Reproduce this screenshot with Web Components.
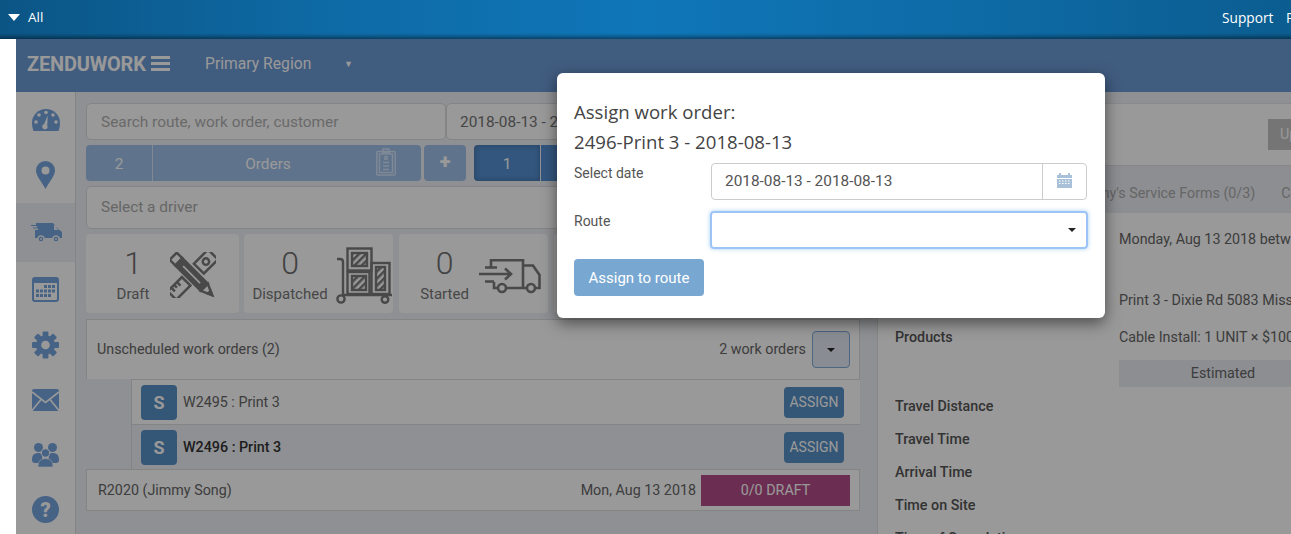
<!DOCTYPE html>
<html>
<head>
<meta charset="utf-8">
<title>ZenduWork</title>
<style>
  html, body { margin: 0; height: 100%; overflow: hidden; background: #fff; }
  body { font-family: Roboto, sans-serif; font-size: 14.3px; }
</style>
</head>
<body>
<zw-topbar></zw-topbar>
<zw-shell>
  <zw-header></zw-header>
  <zw-sidenav></zw-sidenav>
  <zw-orders></zw-orders>
  <zw-details></zw-details>
  <zw-modal></zw-modal>
</zw-shell>

<script>
function define(name, html, proto) {
  const template = document.createElement('template');
  template.innerHTML = html;
  customElements.define(name, class extends HTMLElement {
    constructor() {
      super();
      this.attachShadow({ mode: 'open' });
      this.shadowRoot.appendChild(template.content.cloneNode(true));
    }
    connectedCallback() {
      if (proto) proto.call(this);
    }
  });
}

define('zw-topbar', `
  <style>
    :host {
      display: flex; align-items: center; height: 39px; box-sizing: border-box; padding: 0 0 5px 8px;
      color: #fff; font: 13.500px "Open Sans", sans-serif; white-space: nowrap; overflow: hidden;
      background:
        linear-gradient(to bottom, transparent 33px, rgba(0,0,0,.1) 35px, rgba(0,0,0,.42) 39px),
        linear-gradient(to right, #0b5585 0, #0e6aa5 25%, #0f76b8 50%, #0e6ba6 75%, #0b5d90 100%);
    }
    .arrow { width: 0; height: 0; border: 6.500px solid transparent; border-top: 7px solid #fff; border-bottom: 0; margin-right: 8px; }
    .grow { flex: 1; }
    .support { font-size: 13.700px; width: 64px; }
    .p { font-size: 13.700px; margin-right: -60px; width: 65px; }
  </style>
  <span class="arrow"></span><span>All</span><span class="grow"></span>
  <span class="support">Support</span><span class="p">Profile</span>
`);

define('zw-shell', `
  <style>
    :host {
      display: grid; position: relative; margin-left: 16px; height: 495px; overflow: hidden;
      grid-template-columns: 60px 801px 1fr; grid-template-rows: 53px 1fr; background: #eef0f5;
    }
  </style>
  <slot></slot>
`);

define('zw-header', `
  <style>
    :host {
      grid-column: 1 / -1; display: flex; align-items: center; padding-left: 11px; padding-bottom: 4px;
      background: #6c99d4; color: #fff; white-space: nowrap;
    }
    .logo { font-size: 20px; font-weight: 700; letter-spacing: -.2px; width: 120px; }
    .burger { width: 19px; height: 15px; margin: 0 35px 0 4px; flex: none;
      background: linear-gradient(#fff 3px, transparent 3px 6px, #fff 6px 9px, transparent 9px 12px, #fff 12px); }
    .region { font-size: 15.700px; width: 139px; }
    .caret { font-size: 9px; }
  </style>
  <span class="logo">ZENDUWORK</span><span class="burger"></span>
  <span class="region">Primary Region</span><span class="caret">&#9660;</span>
`);

define('zw-sidenav', `
  <style>
    :host { display: block; background: #fff; border-right: 1px solid #ddd; overflow: hidden; box-sizing: border-box; }
    a { display: flex; align-items: center; justify-content: center; height: 55px; }
    a.top { height: 55.500px; }
    a.on { height: 59px; background: #eef0f5; }
    svg { display: block; fill: #76a5e0; }
  </style>
  <a class="top"><svg width="28" height="22" viewBox="0 0 28 22">
    <path d="M14 0a14 14 0 0 1 14 14c0 3-.6 5.500-1.500 8H1.500C.6 19.500 0 17 0 14A14 14 0 0 1 14 0z"/>
    <g fill="#fff"><circle cx="14" cy="3.500" r="1.800"/><circle cx="7" cy="6" r="1.800"/><circle cx="21" cy="6" r="1.800"/><circle cx="4" cy="13" r="1.800"/><circle cx="24" cy="13" r="1.800"/>
    <path d="M15.800 6.500l-.6 10a2.600 2.600 0 1 1-3.200-1.200z"/></g>
  </svg></a>
  <a class="top"><svg width="19" height="28" viewBox="0 0 19 28">
    <path fill-rule="evenodd" d="M9.500 0A9.500 9.500 0 0 1 19 9.500C19 15 13 21 9.500 28 6 21 0 15 0 9.500A9.500 9.500 0 0 1 9.500 0zm0 5.500a4 4 0 1 0 0 8 4 4 0 0 0 0-8z"/>
  </svg></a>
  <a class="on"><svg width="32" height="19" viewBox="0 0 32 19">
    <path fill-rule="evenodd" d="M6 0H23l6 7 2 1q1 .5 1 2v5H5V7H8V5.500H3V4.500H7V3H1V2H6zM24 2v5h4L25 2z"/>
    <circle cx="11" cy="16" r="3" stroke="#eef0f5" stroke-width="1.500"/><circle cx="26" cy="16" r="3" stroke="#eef0f5" stroke-width="1.500"/>
    <circle cx="11" cy="16" r="1" fill="#eef0f5"/><circle cx="26" cy="16" r="1" fill="#eef0f5"/>
  </svg></a>
  <a><svg width="27" height="25" viewBox="0 0 27 25">
    <rect x="1" y="1" width="25" height="23" rx="2" fill="#fff" stroke="#76a5e0" stroke-width="2"/>
    <rect x="1" y="1" width="25" height="5" fill="#76a5e0"/>
    <rect x="12" y="8" width="3" height="3"/><rect x="16" y="8" width="3" height="3"/><rect x="20" y="8" width="3" height="3"/>
    <rect x="4" y="12.500" width="3" height="3"/><rect x="8" y="12.500" width="3" height="3"/><rect x="12" y="12.500" width="3" height="3"/><rect x="16" y="12.500" width="3" height="3"/><rect x="20" y="12.500" width="3" height="3"/>
    <rect x="4" y="17" width="3" height="3"/><rect x="8" y="17" width="3" height="3"/><rect x="12" y="17" width="3" height="3"/><rect x="16" y="17" width="3" height="3"/>
  </svg></a>
  <a><svg width="27" height="28" viewBox="-14 -14 28 28">
    <circle r="10"/>
    <g><rect x="-3" y="-14" width="6" height="7" rx="1"/><rect x="-3" y="-14" width="6" height="7" rx="1" transform="rotate(45)"/><rect x="-3" y="-14" width="6" height="7" rx="1" transform="rotate(90)"/><rect x="-3" y="-14" width="6" height="7" rx="1" transform="rotate(135)"/><rect x="-3" y="-14" width="6" height="7" rx="1" transform="rotate(180)"/><rect x="-3" y="-14" width="6" height="7" rx="1" transform="rotate(225)"/><rect x="-3" y="-14" width="6" height="7" rx="1" transform="rotate(270)"/><rect x="-3" y="-14" width="6" height="7" rx="1" transform="rotate(315)"/></g>
    <circle r="4.500" fill="#fff"/>
  </svg></a>
  <a><svg width="27" height="22" viewBox="0 0 27 22">
    <rect width="27" height="22" rx="2"/>
    <path d="M0 3l13.500 10.500L27 3M0 21.500L9 10.500M27 21.500L18 10.500" fill="none" stroke="#fff" stroke-width="1.600"/>
  </svg></a>
  <a><svg width="27" height="24" viewBox="0 0 27 24">
    <circle cx="6.500" cy="4.500" r="4.500"/><circle cx="20.500" cy="4.500" r="4.500"/>
    <path d="M0 17c0-5 2-7 6.500-7 2 0 3 .5 4 1.500-1 3 0 5 1 6-2 1-3 1.500-3.500 2.500H3q-3 0-3-3zM27 17c0-5-2-7-6.500-7-2 0-3 .5-4 1.500 1 3 0 5-1 6 2 1 3 1.500 3.500 2.500H24q3 0 3-3z"/>
    <circle cx="13.500" cy="10" r="4.200" stroke="#fff"/>
    <path d="M6 24q-.5-8 7.500-8.500Q21.500 16 21 24z" stroke="#fff" stroke-width=".6"/>
  </svg></a>
  <a><svg width="27" height="27" viewBox="0 0 27 27">
    <circle cx="13.500" cy="13.500" r="13.500"/>
    <text x="13.500" y="20.500" text-anchor="middle" fill="#fff" font-family="Roboto, sans-serif" font-weight="900" font-size="20">?</text>
  </svg></a>
`);

define('zw-stat', `
  <style>
    :host { display: flex; align-items: flex-start; background: #fff; border-radius: 4px; height: 79px; box-sizing: border-box; position: relative; flex: none; color: #777; }
    .txt { text-align: center; white-space: nowrap; display: flex; flex-direction: column; align-items: center; }
    .n { font-size: 32px; line-height: 36px; margin-top: 11px; font-weight: 300; color: #6f6f6f; }
    .l { font-size: 15px; line-height: 20px; margin-top: 3px; }
    ::slotted(svg) { flex: none; display: block; }
  </style>
  <div class="txt"><span class="n"></span><span class="l"></span></div>
  <slot></slot>
`, function () {
  const r = this.shadowRoot;
  r.querySelector('.n').textContent = this.getAttribute('value');
  r.querySelector('.l').textContent = this.getAttribute('label');
  r.querySelector('.txt').style.width = this.getAttribute('tw') + 'px';
});

define('zw-order-row', `
  <style>
    :host { display: flex; align-items: center; height: 45px; box-sizing: border-box; margin-left: 45px; padding: 0 16px 0 9px; background: #fff; border-top: 1px solid #ddd; border-left: 1px solid #ddd; color: #666; }
    :host([selected]) { background: #eef0f5; color: #333; font-weight: 500; }
    .s { width: 36px; height: 35px; border-radius: 4px; background: #5790c6; color: #fff; font-size: 18px; font-weight: 700; display: flex; align-items: center; justify-content: center; margin-right: 6px; flex: none; }
    .t { flex: 1; white-space: nowrap; }
    .b { width: 60px; height: 31px; border-radius: 4px; background: #5790c6; color: #fff; display: flex; align-items: center; justify-content: center; font-weight: 400; font-size: 14px; }
  </style>
  <span class="s">S</span><span class="t"><slot></slot></span><span class="b">ASSIGN</span>
`);

define('zw-orders', `
  <style>
    :host { display: flex; flex-direction: column; padding: 11px 17px 0 10px; color: #666; min-width: 0; }
    .field { background: #fff; border: 1px solid #ddd; border-radius: 5px; box-sizing: border-box; display: flex; align-items: center; white-space: nowrap; font-size: 15.400px; overflow: hidden; }
    .r1 { display: flex; height: 37px; }
    .search { width: 360px; padding-left: 14px; color: #b0b0b0; }
    .date { flex: 1; padding-left: 13px; color: #757575; }
    .r2 { display: flex; height: 36px; margin-top: 5px; color: #fff; font-size: 15.400px; }
    .seg { background: #a0c0ea; display: flex; align-items: center; justify-content: center; box-sizing: border-box; position: relative; padding-top: 1px; }
    .two { width: 67px; border-radius: 4px 0 0 4px; border-right: 1px solid #d6e4f7; }
    .ord { width: 268px; border-radius: 0 4px 4px 0; padding-right: 38px; }
    .ord svg { position: absolute; left: 223px; top: 3px; }
    .plus { width: 42px; margin-left: 3px; border-radius: 4px; font-weight: 900; font-size: 20px; padding-bottom: 4px; padding-top: 0; }
    .one { width: 66px; margin-left: 8px; background: #5590d2; border-radius: 4px 0 0 4px; box-shadow: inset 0 0 6px rgba(0,0,0,.25); }
    .more { flex: 1; margin-left: 1px; background: #5590d2; border-radius: 0 4px 4px 0; }
    .driver { height: 43px; margin-top: 5px; padding: 0 0 2px 14px; color: #aaa; }
    .stats { display: flex; margin-top: 5px; height: 79px; }
    .unsched { display: flex; align-items: center; height: 60px; box-sizing: border-box; margin-top: 6px; padding: 0 9px 2px 10px; background: #fff; border: 1px solid #ddd; border-bottom: 0; white-space: nowrap; }
    .grow { flex: 1; }
    .toggle { margin-top: 2px; width: 38px; height: 37px; box-sizing: border-box; border: 1px solid #7ea9d9; border-radius: 4px; background: #e4ebf5; margin-left: 6px; display: flex; align-items: center; justify-content: center; }
    .caret { width: 0; height: 0; border: 4px solid transparent; border-top: 4px solid #222; border-bottom: 0; }
    .route { display: flex; align-items: center; height: 42px; box-sizing: border-box; padding: 0 9px 0 11px; background: #fff; border: 1px solid #ddd; white-space: nowrap; }
    .draft { width: 149px; height: 31px; background: #b34c87; color: #fff; display: flex; align-items: center; justify-content: center; margin-left: 5px; }
    svg { fill: none; stroke: #7a7a7a; }
  </style>
  <div class="r1">
    <div class="field search">Search route, work order, customer</div>
    <div class="field date">2018-08-13 - 2018-08-13</div>
  </div>
  <div class="r2">
    <div class="seg two">2</div>
    <div class="seg ord">Orders
      <svg width="20" height="28" viewBox="0 0 20 28" style="stroke:#d5e5fa" stroke-width="1.400">
        <rect x=".8" y="3.500" width="18.400" height="23.500" rx="1"/><rect x="3.500" y="6" width="13" height="18.500"/>
        <path d="M7 3.500V1h6v2.500M6.500 6V4.500h7V6"/><circle cx="10" cy="10" r="1.500"/><path d="M7 14.500h6M7 18h6M7 21.500h6"/>
      </svg>
    </div>
    <div class="seg plus">+</div>
    <div class="seg one">1</div>
    <div class="seg more"></div>
  </div>
  <div class="field driver">Select a driver</div>
  <div class="stats">
    <zw-stat value="1" label="Draft" tw="94" style="width:153px">
      <svg style="margin:18px 0 0 -10px" width="46" height="46" viewBox="0 0 46 46" stroke-width="2.500">
        <g transform="translate(22.500 23) rotate(-45)">
          <rect x="-29" y="-6" width="20" height="12"/><path d="M-24-6v5M-20-6v4M-16-6v5"/>
          <rect x="9" y="-7" width="20" height="14"/><circle cx="19" cy="0" r="3.200"/>
        </g>
        <g transform="translate(23 24) rotate(45)">
          <rect x="-28" y="-5" width="8" height="10" fill="#fff"/>
          <rect x="-20" y="-5" width="36" height="10" fill="#7a7a7a"/><path d="M-14 0H10" stroke="#fff" stroke-width="1.600"/>
          <path d="M16-5L27 0 16 5z" fill="#fff"/><path d="M23-1.800L27 0l-4 1.800z" fill="#7a7a7a"/>
        </g>
      </svg>
    </zw-stat>
    <zw-stat value="0" label="Dispatched" tw="92" style="width:149px;margin-left:5px">
      <svg style="margin:13px 0 0 0" width="56" height="57" viewBox="0 0 56 57" stroke-width="2.400">
        <defs><pattern id="h" width="5" height="5" patternUnits="userSpaceOnUse" patternTransform="rotate(45)"><rect width="2.500" height="5" fill="#7a7a7a" stroke="none"/></pattern></defs>
        <rect x="11.500" y="1.500" width="24" height="22"/><rect x="16" y="6" width="15" height="13" fill="url(#h)"/>
        <rect x="11.500" y="25" width="22" height="22"/><rect x="16" y="29" width="14" height="14" fill="url(#h)"/>
        <rect x="35.500" y="16" width="18" height="31"/><rect x="40" y="20" width="9" height="23" fill="url(#h)"/>
        <path d="M1 12h3q3 0 3 3v33h49"/><circle cx="5" cy="52" r="3.600"/><circle cx="49" cy="52.500" r="3.300"/>
      </svg>
    </zw-stat>
    <zw-stat value="0" label="Started" tw="91" style="width:149px;margin-left:6px">
      <svg style="margin:25px 0 0 -11px" width="62" height="35" viewBox="0 0 62 35" stroke-width="2.600">
        <path d="M12 8V1.200H44V29H27M19 29H15V23M44 6.500H54L60.500 16V29H56M48 29H44"/>
        <path d="M6 8.500H18M0 15H32M26 9.500l6 5.500-6 5.500M6 22.500H15"/>
        <circle cx="23" cy="29" r="4"/><circle cx="52" cy="29" r="4"/>
      </svg>
    </zw-stat>
    <zw-stat value="0" label="Completed" tw="100" style="width:149px;margin-left:6px"></zw-stat>
  </div>
  <div class="unsched"><span>Unscheduled work orders (2)</span><span class="grow"></span><span>2 work orders</span><span class="toggle"><span class="caret"></span></span></div>
  <zw-order-row>W2495 : Print 3</zw-order-row>
  <zw-order-row selected>W2496 : Print 3</zw-order-row>
  <div class="route"><span>R2020 (Jimmy Song)</span><span class="grow"></span><span>Mon, Aug 13 2018</span><span class="draft">0/0 DRAFT</span></div>
`);

define('zw-details', `
  <style>
    :host { display: flex; flex-direction: column; margin-top: 11px; background: #fff; border-top: 1px solid #e6e6e6; border-left: 1px solid #e0e0e0; color: #666; white-space: nowrap; overflow: hidden; min-width: 0; }
    .tools { height: 62px; flex: none; display: flex; align-items: center; padding-left: 390px; padding-bottom: 1px; box-sizing: border-box; border-bottom: 1px solid #e0e0e0; }
    .btn { flex: none; width: 70px; height: 31px; background: #c3c3c3; color: #fff; display: flex; align-items: center; padding-left: 12px; box-sizing: border-box; }
    .tabs { height: 47px; flex: none; background: #ebedf3; display: flex; align-items: center; color: #aaa; padding-left: 195px; padding-top: 7px; box-sizing: border-box; }
    .tabs span { flex: none; margin-right: 26px; }
    .grid { display: grid; grid-template-columns: 224px 1fr; padding: 16px 0 0 17px; line-height: 20px; }
    b { font-weight: 500; color: #555; }
    .est { margin-top: 13px; height: 27px; line-height: 27px; background: #ebedf3; text-align: center; width: 208px; }
    .grid > * { min-width: 0; }
  </style>
  <div class="tools"><span class="btn">Update</span></div>
  <div class="tabs"><span>Jimmy's Service Forms (0/3)</span><span>Comments</span></div>
  <div class="grid">
    <b style="height:61px">Schedule</b><div>Monday, Aug 13 2018 between</div>
    <b style="height:37px">Location</b><div>Print 3 - Dixie Rd 5083 Mississauga</div>
    <b style="height:69px">Products</b><div>Cable Install: 1 UNIT &times; $100<div class="est">Estimated</div></div>
    <b style="height:33px">Travel Distance</b><div></div>
    <b style="height:33px">Travel Time</b><div></div>
    <b style="height:33px">Arrival Time</b><div></div>
    <b style="height:33px">Time on Site</b><div></div>
    <b style="height:33px">Time of Completion</b><div></div>
  </div>
`);

define('zw-modal', `
  <style>
    :host { position: absolute; inset: 0; background: rgba(0,0,0,.4); display: block; }
    .dlg { margin: 34px 0 0 541px; width: 548px; height: 245px; box-sizing: border-box; padding: 24px 17px 0; background: #fff; border-radius: 6px; box-shadow: 0 5px 15px rgba(0,0,0,.5); color: #444; font-family: "Open Sans", sans-serif; }
    h4 { margin: 0; font-size: 18.600px; font-weight: 400; line-height: 30px; white-space: nowrap; }
    .row { display: flex; font: 14px/20px Roboto, sans-serif; color: #555; }
    .row label { width: 137px; flex: none; }
    .ctl { display: flex; height: 37px; box-sizing: border-box; border: 1px solid #ccc; border-radius: 4px; width: 376px; overflow: hidden; }
    .val { flex: 1; padding-left: 13px; line-height: 35px; color: #555; font-size: 15.400px; }
    .add { width: 44px; box-sizing: border-box; border-left: 1px solid #ccc; display: flex; align-items: center; justify-content: center; padding-bottom: 3px; }
    .sel { height: 38px; width: 378px; margin-left: -1px; border: 2px solid #9cc4f7; box-shadow: 0 0 4px rgba(102,175,233,.6); justify-content: flex-end; align-items: center; padding-right: 10px; }
    .caret { width: 0; height: 0; border: 4px solid transparent; border-top: 4px solid #222; border-bottom: 0; }
    button { display: block; margin-top: 10px; width: 130px; height: 37px; border: 0; border-radius: 4px; background: #78a7d1; color: #fff; font: 15px Roboto, sans-serif; padding: 0; }
  </style>
  <div class="dlg">
    <h4>Assign work order:</h4>
    <h4>2496-Print 3 - 2018-08-13</h4>
    <div class="row" style="margin-top:6px"><label>Select date</label>
      <div class="ctl"><span class="val">2018-08-13 - 2018-08-13</span>
        <span class="add"><svg width="15" height="16" viewBox="0 0 15 16"><path fill="#a9c1d8" d="M2 1h2v2h7V1h2v2h2v3H0V3h2zM0 7h15v9H0zm2 1.500v1h1.500v-1zm3 0v1h1.500v-1zm3 0v1h1.500v-1zm3 0v1h1.500v-1zM2 11v1h1.500v-1zm3 0v1h1.500v-1zm3 0v1h1.500v-1zm3 0v1h1.500v-1z" fill-rule="evenodd"/></svg></span>
      </div>
    </div>
    <div class="row" style="margin-top:11px"><label>Route</label>
      <div class="ctl sel"><span class="caret"></span></div>
    </div>
    <button>Assign to route</button>
  </div>
`);
</script>
</body>
</html>
